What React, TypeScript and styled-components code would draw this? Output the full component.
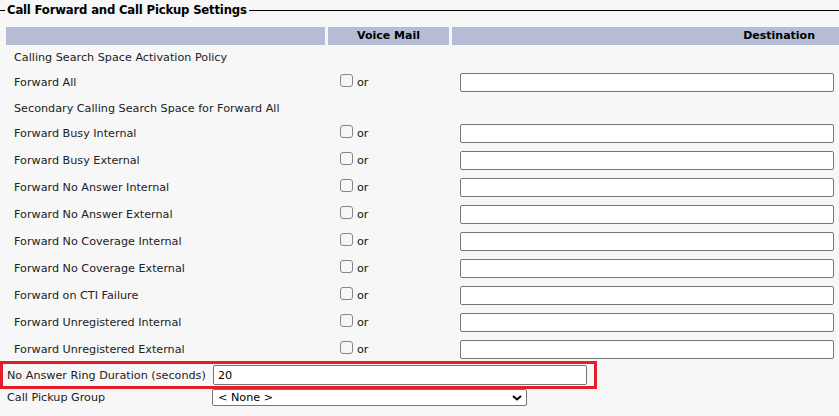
import React from "react";
import styled, { createGlobalStyle } from "styled-components";

const Global = createGlobalStyle`
  html, body { margin: 0; padding: 0; background: #f7f7f7; }
  body { font-family: "DejaVu Sans", Verdana, sans-serif; font-size: 11.2px; color: #222; }
  * { box-sizing: border-box; }
`;

const Fieldset = styled.fieldset`
  margin: 0;
  padding: 0;
  border: none;
  border-top: 1px solid #000;
  margin-top: 3px;
  min-width: 0;
`;

const Legend = styled.legend`
  margin-left: 5px;
  padding: 0 2px;
  font-weight: bold;
  font-size: 11.7px;
  letter-spacing: -0.2px;
  color: #000;
  line-height: 14px;
`;

const Grid = styled.div`
  display: grid;
  grid-template-columns: 319px 121px 1fr;
  column-gap: 3px;
  padding-left: 6px;
  margin-top: 10px;
`;

const HeadCell = styled.div<{ $align: string }>`
  background: #b4bcd6;
  height: 18px;
  line-height: 18px;
  font-weight: bold;
  font-size: 11px;
  color: #000;
  text-align: ${(p) => p.$align};
  padding-right: ${(p) => (p.$align === "right" ? "24px" : "0")};
`;

const LabelCell = styled.div<{ $h: number }>`
  height: ${(p) => p.$h}px;
  display: flex;
  align-items: center;
  padding-left: 8px;
  white-space: nowrap;
`;

const VmCell = styled.div<{ $h: number }>`
  height: ${(p) => p.$h}px;
  display: flex;
  align-items: center;
  padding-left: 12px;
`;

const DestCell = styled.div<{ $h: number }>`
  height: ${(p) => p.$h}px;
  display: flex;
  align-items: center;
  padding-left: 8px;
  padding-right: 5px;
`;

const Check = styled.span`
  display: inline-block;
  width: 13px;
  height: 13px;
  border: 1px solid #858585;
  border-radius: 3px;
  margin-right: 4px;
  position: relative;
  top: -2px;
`;

const Or = styled.span`
  color: #111;
`;

const TextInput = styled.input`
  width: 100%;
  height: 19px;
  border: 1px solid #767676;
  border-radius: 2px;
  background: #fff;
  font: inherit;
  padding: 0 4px;
  color: #000;
  outline: none;
`;

const Highlight = styled.div`
  width: 597px;
  margin-top: -2px;
  border: 3px solid #e51d2a;
  display: grid;
  grid-template-columns: 206px 374px;
  align-items: center;
  height: 28px;
  padding-left: 4px;
`;

const BottomRow = styled.div`
  display: grid;
  grid-template-columns: 205px 315px;
  align-items: center;
  padding-left: 7px;
  height: 17px;
`;

const Label = styled.span`
  white-space: nowrap;
`;

const RingInput = styled(TextInput)`
  height: 20px;
  padding: 0 4px;
`;

const SelectBox = styled.div`
  height: 17px;
  border: 1px solid #767676;
  border-radius: 2px;
  background: #fff;
  display: flex;
  align-items: center;
  justify-content: space-between;
  padding: 0 4px 0 5px;
  color: #000;
`;

type Row = { label: string; input: boolean };

const rows: Row[] = [
  { label: "Calling Search Space Activation Policy", input: false },
  { label: "Forward All", input: true },
  { label: "Secondary Calling Search Space for Forward All", input: false },
  { label: "Forward Busy Internal", input: true },
  { label: "Forward Busy External", input: true },
  { label: "Forward No Answer Internal", input: true },
  { label: "Forward No Answer External", input: true },
  { label: "Forward No Coverage Internal", input: true },
  { label: "Forward No Coverage External", input: true },
  { label: "Forward on CTI Failure", input: true },
  { label: "Forward Unregistered Internal", input: true },
  { label: "Forward Unregistered External", input: true },
];

const Chevron = () => (
  <svg width="10" height="6" viewBox="0 0 10 6">
    <path d="M1 1 L5 4.5 L9 1" fill="none" stroke="#000" strokeWidth="2" />
  </svg>
);

export default function App() {
  return (
    <>
      <Global />
      <Fieldset>
        <Legend>Call Forward and Call Pickup Settings</Legend>
        <Grid>
          <HeadCell $align="left" />
          <HeadCell $align="center">Voice Mail</HeadCell>
          <HeadCell $align="right">Destination</HeadCell>
          {rows.map((r, i) => {
            const h = r.input ? 27 : 24;
            return (
              <React.Fragment key={i}>
                <LabelCell $h={h}>{r.label}</LabelCell>
                <VmCell $h={h}>
                  {r.input && (
                    <>
                      <Check />
                      <Or>or</Or>
                    </>
                  )}
                </VmCell>
                <DestCell $h={h}>{r.input && <TextInput type="text" />}</DestCell>
              </React.Fragment>
            );
          })}
        </Grid>
        <Highlight>
          <Label>No Answer Ring Duration (seconds)</Label>
          <RingInput type="text" defaultValue="20" />
        </Highlight>
        <BottomRow>
          <Label>Call Pickup Group</Label>
          <SelectBox>
            <span>&lt; None &gt;</span>
            <Chevron />
          </SelectBox>
        </BottomRow>
      </Fieldset>
    </>
  );
}
